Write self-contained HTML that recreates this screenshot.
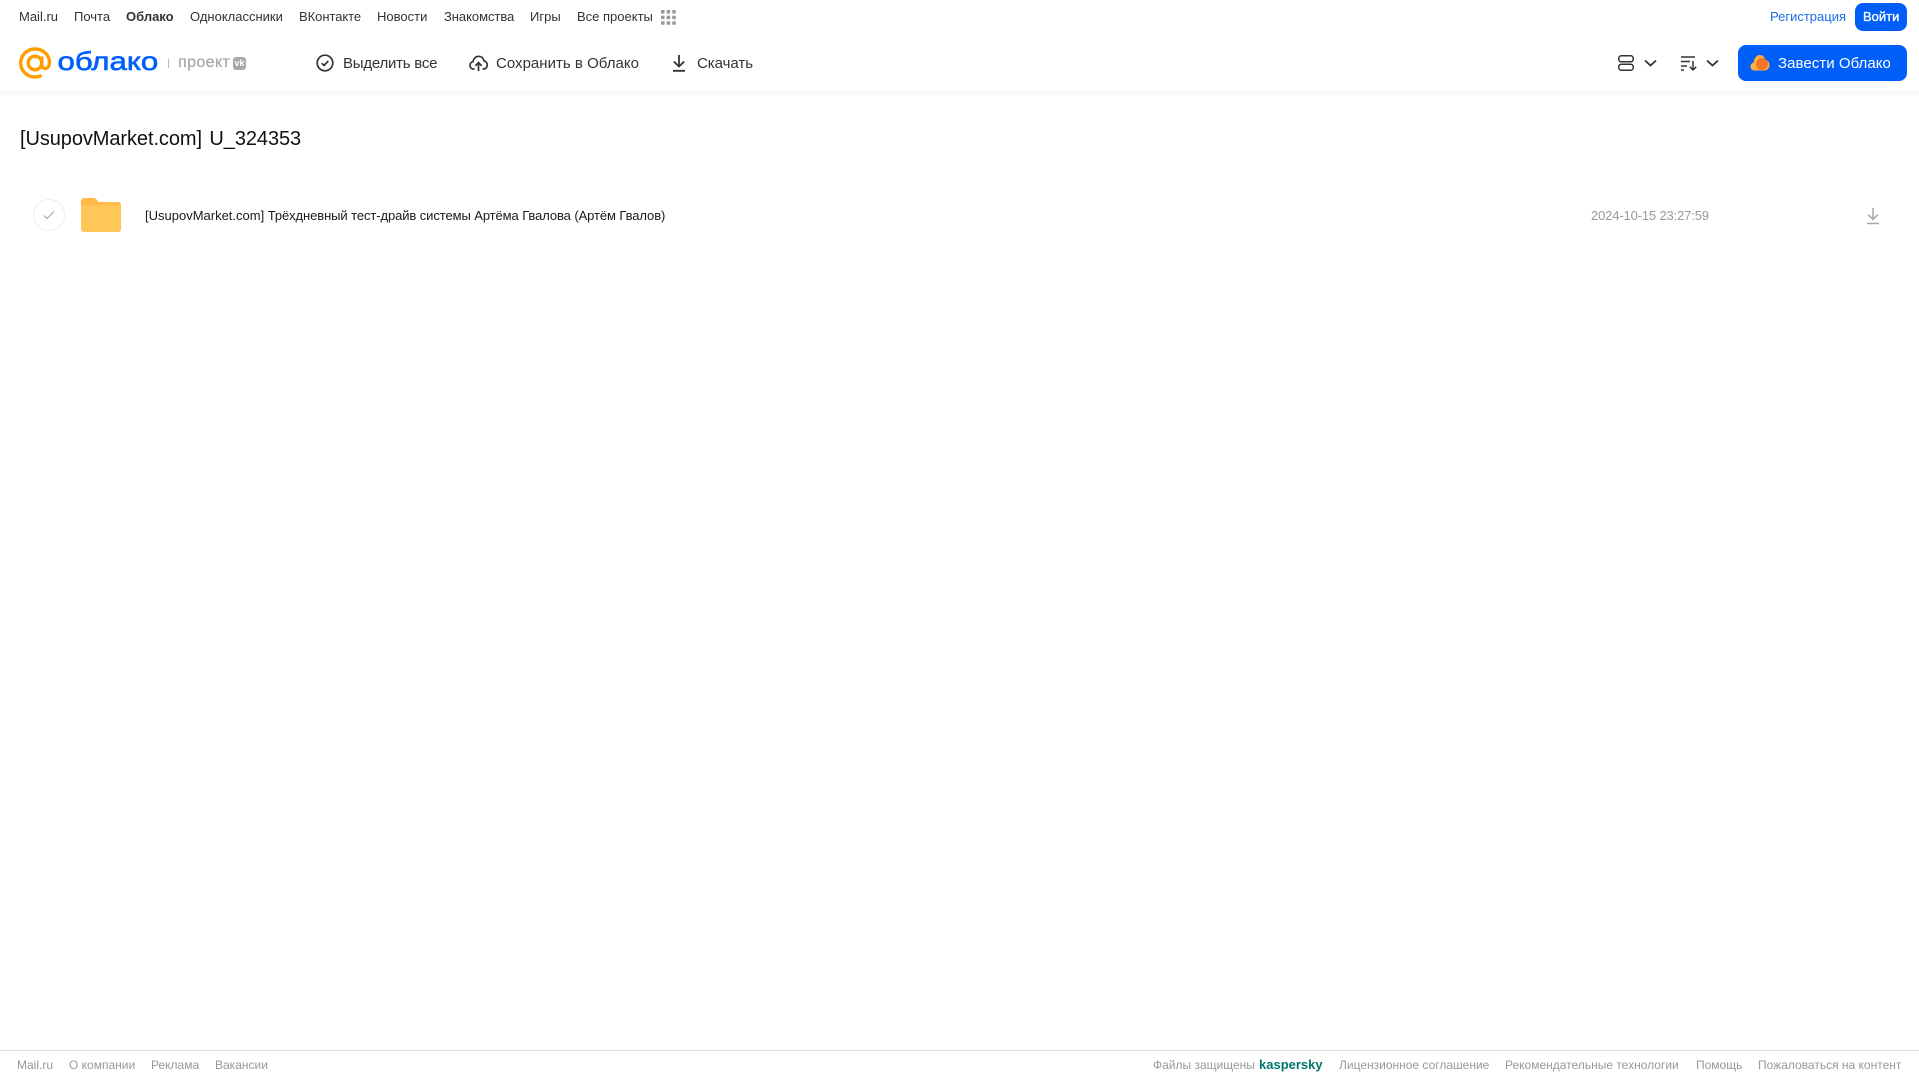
<!DOCTYPE html>
<html lang="ru"><head><meta charset="utf-8"><title>Облако</title>
<style>
html,body{margin:0;padding:0;width:1919px;height:1079px;overflow:hidden;background:#fff}
body{position:relative;font-family:"Liberation Sans",Arial,sans-serif;color:#2c2d2e}
.t{position:absolute;white-space:nowrap;line-height:18px}
a{color:inherit;text-decoration:none}
.n{font-size:13px;top:8px;color:#333}
.b{font-size:15px;top:55px;color:#333}
.f{font-size:12px;top:1056px;color:#999}
svg{position:absolute;display:block;overflow:visible}
header{position:absolute;left:0;top:0;width:1919px;height:91px;background:#fff;box-shadow:0 1px 6px rgba(0,0,0,.07)}
.btn{position:absolute;background:#005ff9;border-radius:8px}
footer{position:absolute;left:0;top:1050px;width:1919px;height:29px;border-top:1px solid #ddd;box-sizing:border-box}
</style></head><body>
<header>
<a class="t n" style="left:19px">Mail.ru</a>
<a class="t n" style="left:74px">Почта</a>
<a class="t n" style="left:126px;font-weight:700">Облако</a>
<a class="t n" style="left:190px">Одноклассники</a>
<a class="t n" style="left:299px;letter-spacing:-.05px">ВКонтакте</a>
<a class="t n" style="left:377px">Новости</a>
<a class="t n" style="left:444px;letter-spacing:-.05px">Знакомства</a>
<a class="t n" style="left:530px">Игры</a>
<a class="t n" style="left:577px">Все проекты</a>
<svg style="left:661px;top:10px" width="15" height="15" fill="#999"><rect width="3.6" height="3.6" rx=".8"/><rect x="5.6" width="3.6" height="3.6" rx=".8"/><rect x="11.2" width="3.6" height="3.6" rx=".8"/><rect y="5.6" width="3.6" height="3.6" rx=".8"/><rect x="5.6" y="5.6" width="3.6" height="3.6" rx=".8"/><rect x="11.2" y="5.6" width="3.6" height="3.6" rx=".8"/><rect y="11.2" width="3.6" height="3.6" rx=".8"/><rect x="5.6" y="11.2" width="3.6" height="3.6" rx=".8"/><rect x="11.2" y="11.2" width="3.6" height="3.6" rx=".8"/></svg>

<svg style="left:0;top:0" width="60" height="91" fill="none" stroke="#ff9e00" stroke-width="3.400"><circle cx="35" cy="63" r="6.800"/><path d="M41.800 56.500v8.500c0 5 7.700 5 7.700-2.500 0-7.700-6.500-13.500-14.500-13.500-8 0-14.300 6.200-14.300 14 0 7.800 6.300 14 14.300 14 2.500 0 4.500-.5 6.500-1.500"/></svg>
<svg style="left:56px;top:40px" width="106" height="40"><text transform="translate(1.500,30) scale(1.2,1)" font-size="26" fill="#005ff9" stroke="#005ff9" stroke-width=".6" font-family="Liberation Sans">облако</text></svg>
<div style="position:absolute;left:168px;top:59px;width:1px;height:9px;background:#bbb"></div>
<span class="t" style="left:178px;top:54px;font-size:16px;color:#a9a9a9;letter-spacing:.4px;-webkit-text-stroke:.3px #a9a9a9">проект</span>
<div style="position:absolute;left:233px;top:57px;width:13px;height:13px;border-radius:3px;background:#a9a9a9;color:#fff;font-size:9px;font-weight:700;line-height:12px;text-align:center">vk</div>

<svg style="left:316px;top:54px" width="18" height="18" fill="none" stroke="#333" stroke-width="1.700"><circle cx="9" cy="9" r="7.800"/><path d="M5.700 9.200l2.300 2.300 4.300-4.500"/></svg>
<span class="t b" style="left:343px;letter-spacing:-.23px">Выделить все</span>
<svg style="left:469px;top:54px" width="19" height="18" fill="none" stroke="#333" stroke-width="1.700"><path d="M5.500 15H4.500C2.300 15 1 13.300 1 11.300c0-1.900 1.300-3.300 3-3.600C4.500 4.500 6.800 2.300 9.600 2.300c2.700 0 5 2 5.500 4.700 2 .3 3.200 2 3.200 4 0 2.200-1.600 4-3.800 4h-1"/><path d="M9.500 17V9M6.300 11.800l3.200-3.200 3.200 3.200"/></svg>
<span class="t b" style="left:496px;letter-spacing:.02px">Сохранить в Облако</span>
<svg style="left:671px;top:54px" width="16" height="18" fill="none" stroke="#333" stroke-width="1.800"><path d="M8 1v11M2.800 7.500L8 12.500l5.200-5M2 16.800h12"/></svg>
<span class="t b" style="left:697px;letter-spacing:-.03px">Скачать</span>

<a class="t" style="left:1770px;top:8px;font-size:13px;color:#1a6ee8">Регистрация</a>
<div class="btn" style="left:1855px;top:3px;width:52px;height:28px"></div>
<a class="t" style="left:1863px;top:8px;font-size:13px;color:#fff;-webkit-text-stroke:.35px #fff">Войти</a>

<svg style="left:1618px;top:55px" width="16" height="16" fill="none" stroke="#333" stroke-width="1.500"><rect x=".8" y=".8" width="14.400" height="6" rx="2.500"/><rect x=".8" y="9.200" width="14.400" height="6" rx="2.500"/></svg>
<svg style="left:1644px;top:59px" width="13" height="8" fill="none" stroke="#333" stroke-width="1.800"><path d="M1 1.500l5.500 5 5.500-5"/></svg>
<svg style="left:1681px;top:56px" width="17" height="15" fill="none" stroke="#333" stroke-width="1.500"><path d="M0 1h14M0 5.500h9M0 10h6M0 14h3M12 5v9M8.800 10.800l3.200 3.200 3.200-3.200"/></svg>
<svg style="left:1706px;top:59px" width="13" height="8" fill="none" stroke="#333" stroke-width="1.800"><path d="M1 1.500l5.500 5 5.500-5"/></svg>

<div class="btn" style="left:1738px;top:45px;width:169px;height:36px"></div>
<svg style="left:1750px;top:54px" width="20" height="17"><path d="M4.500 16.500C2 16.500 .5 14.700 .5 12.500c0-2 1.300-3.600 3.200-4C4.200 4 6.800 1 9.700 1c2.700 0 5 2 5.500 5 2.500.2 4.300 2.300 4.300 5 0 3-2.200 5.500-5 5.500z" fill="#ffb03a"/><circle cx="12" cy="10" r="6" fill="#f5752a"/></svg>
<span class="t" style="left:1778px;top:55px;font-size:15px;color:#fff;letter-spacing:.05px">Завести Облако</span>
</header>

<main>
<h1 class="t" style="left:20px;top:126px;margin:0;font-size:20px;font-weight:400;line-height:26px;color:#111;word-spacing:2px;letter-spacing:-.08px">[UsupovMarket.com] U_324353</h1>
<div style="position:absolute;left:33px;top:199px;width:30px;height:30px;border:1px solid #eee;border-radius:50%"></div>
<svg style="left:43px;top:210px" width="12" height="10" fill="none" stroke="#aaa" stroke-width="1.200"><path d="M1 5.500l3 3 7-7"/></svg>
<svg style="left:81px;top:198px" width="40" height="34"><path d="M0 3a3 3 0 0 1 3-3h9c2 0 3 .8 4 2l1.500 2H37a3 3 0 0 1 3 3v4H0z" fill="#ffba48"/><path d="M0 7h37a3 3 0 0 1 3 3v21a3 3 0 0 1-3 3H3a3 3 0 0 1-3-3z" fill="#ffc658"/></svg>
<a class="t" style="left:145px;top:207px;font-size:13px;letter-spacing:-.09px;color:#1a1a1a"><span style="letter-spacing:0">[UsupovMarket.com]</span> Трёхдневный тест-драйв системы Артёма Гвалова (Артём Гвалов)</a>
<span class="t" style="left:1591px;top:207px;font-size:13px;letter-spacing:-.15px;color:#999">2024-10-15 23:27:59</span>
<svg style="left:1866px;top:207px" width="14" height="18" fill="none" stroke="#a8a8a8" stroke-width="1.500"><path d="M7 1v11M2 7.500L7 12.500l5-5M1 16.500h12"/></svg>
</main>

<footer></footer>
<a class="t f" style="left:17px">Mail.ru</a>
<a class="t f" style="left:69px">О компании</a>
<a class="t f" style="left:151px">Реклама</a>
<a class="t f" style="left:215px">Вакансии</a>
<span class="t f" style="left:1153px">Файлы защищены</span>
<span class="t f" style="left:1259px;font-size:13px;font-weight:700;color:#00796b">kaspersky</span>
<a class="t f" style="left:1339px">Лицензионное соглашение</a>
<a class="t f" style="left:1505px">Рекомендательные технологии</a>
<a class="t f" style="left:1696px">Помощь</a>
<a class="t f" style="left:1758px">Пожаловаться на контент</a>
</body></html>
